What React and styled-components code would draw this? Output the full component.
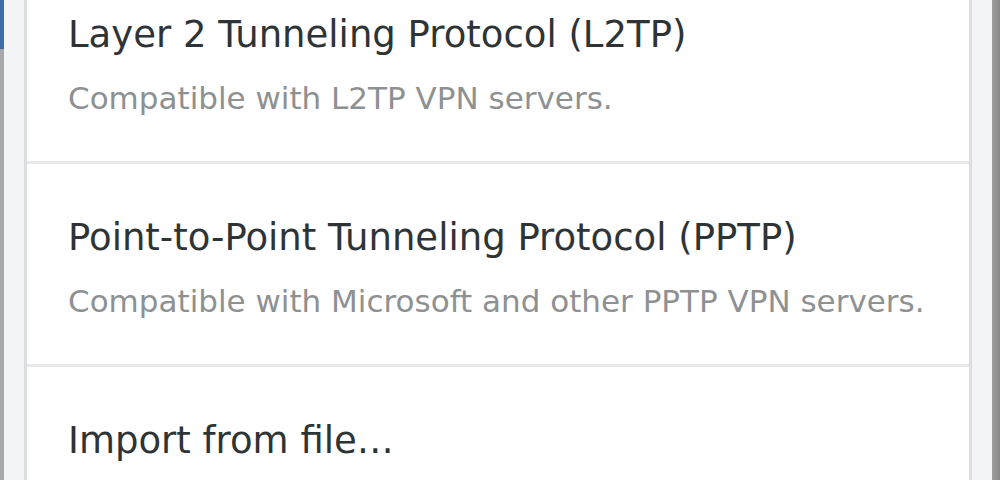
import React from "react";
import styled, { createGlobalStyle } from "styled-components";

const Global = createGlobalStyle`
  html, body { margin: 0; padding: 0; background: #f3f4f5; overflow: hidden; }
  #root { height: 480px; }
`;

const Screen = styled.div`
  display: flex;
  width: 1000px;
  height: 480px;
  overflow: hidden;
  background: #f3f4f5;
`;

const EdgeLeft = styled.div`
  width: 4px;
  flex: none;
  display: flex;
  flex-direction: column;
  background: #a9a9a9;
`;

const EdgeAccent = styled.div`
  height: 49px;
  background: #3b6ea8;
`;

const Gutter = styled.div`
  width: ${(p) => p.$w}px;
  flex: none;
  background: #f3f4f5;
`;

const EdgeRight = styled.div`
  width: 8px;
  flex: none;
  background: linear-gradient(to right, #9d9d9d, #8a8a8a);
`;

const Dialog = styled.div`
  flex: 1;
  background: #ffffff;
  border-left: 3px solid #dcdde0;
  border-right: 3px solid #dcdde0;
  overflow: hidden;
`;

const List = styled.div`
  margin-top: -39px;
  display: flex;
  flex-direction: column;
`;

const Row = styled.div`
  height: 203px;
  box-sizing: border-box;
  padding: 52px 41px 0;
  border-bottom: 3px solid #e8e8e8;
  font-family: "DejaVu Sans", "Noto Sans", sans-serif;
`;

const Title = styled.div`
  font-size: 37px;
  line-height: 44px;
  color: #2e3436;
  white-space: nowrap;
`;

const Subtitle = styled.div`
  margin-top: 19px;
  font-size: 31px;
  line-height: 44px;
  color: #8e9192;
  white-space: nowrap;
`;

const items = [
  { title: "Layer 2 Tunneling Protocol (L2TP)", sub: "Compatible with L2TP VPN servers." },
  { title: "Point-to-Point Tunneling Protocol (PPTP)", sub: "Compatible with Microsoft and other PPTP VPN servers." },
  { title: "Import from file…" },
];

export default function App() {
  return (
    <>
      <Global />
      <Screen>
        <EdgeLeft>
          <EdgeAccent />
        </EdgeLeft>
        <Gutter $w={20} />
        <Dialog>
          <List>
            {items.map((it) => (
              <Row key={it.title}>
                <Title>{it.title}</Title>
                {it.sub && <Subtitle>{it.sub}</Subtitle>}
              </Row>
            ))}
          </List>
        </Dialog>
        <Gutter $w={20} />
        <EdgeRight />
      </Screen>
    </>
  );
}
